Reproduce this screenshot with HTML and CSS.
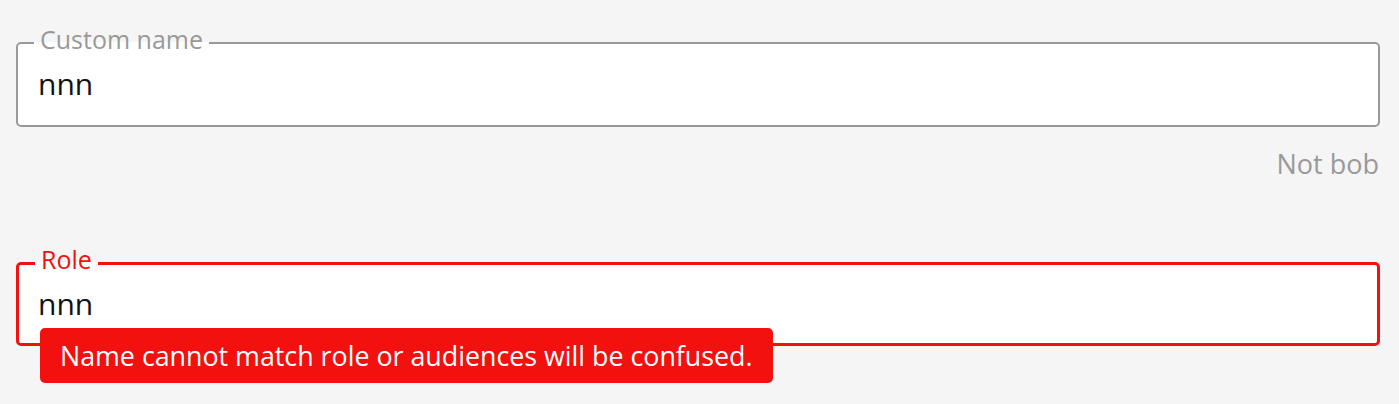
FILE: index.html
```html
<!DOCTYPE html>
<html lang="en">
<head>
<meta charset="utf-8">
<title>Form</title>
<link rel="stylesheet" href="styles.css">
</head>
<body>
<main class="form">
  <div class="field">
    <fieldset class="box">
      <legend class="label">Custom name</legend>
      <div class="value">nnn</div>
    </fieldset>
    <div class="hint">Not bob</div>
  </div>
  <div class="field field-error">
    <fieldset class="box">
      <legend class="label">Role</legend>
      <div class="value">nnn</div>
    </fieldset>
    <div class="tooltip">Name cannot match role or audiences will be confused.</div>
  </div>
</main>
</body>
</html>
```
FILE: styles.css
```css
html, body {
  margin: 0;
  background: #f5f5f5;
}
html {
  height: 100%;
}
body {
  min-height: 100%;
  font-family: "Open Sans", "Noto Sans", sans-serif;
}
.form {
  padding: 25px 19px 70px 16px;
}
.field {
  position: relative;
}
.box {
  margin: 0;
  border: 2px solid #999999;
  border-radius: 5px;
  background: #ffffff;
  padding: 0 20px;
  min-width: 0;
}
.label {
  margin-left: -4px;
  padding: 0 6px 8px;
  font-size: 25px;
  line-height: 28px;
  color: #999999;
}
.value {
  font-size: 30px;
  line-height: 36px;
  color: #111111;
  padding: 5px 0 23px;
}
.hint {
  text-align: right;
  font-size: 27px;
  line-height: 34px;
  color: #999999;
  margin-top: 20px;
  margin-right: 1px;
}
.field-error {
  margin-top: 64px;
}
.field-error .box {
  border: 3px solid #f2110e;
  padding: 0 19px;
}
.field-error .label {
  color: #f2110e;
  margin-left: -3px;
}
.field-error .value {
  padding-bottom: 21px;
}
.tooltip {
  position: absolute;
  z-index: 2;
  left: 24px;
  top: 83px;
  height: 55px;
  line-height: 55px;
  padding: 0 20px;
  background: #f2110e;
  color: #ffffff;
  border-radius: 5px;
  font-size: 26.8px;
  white-space: nowrap;
}
```
